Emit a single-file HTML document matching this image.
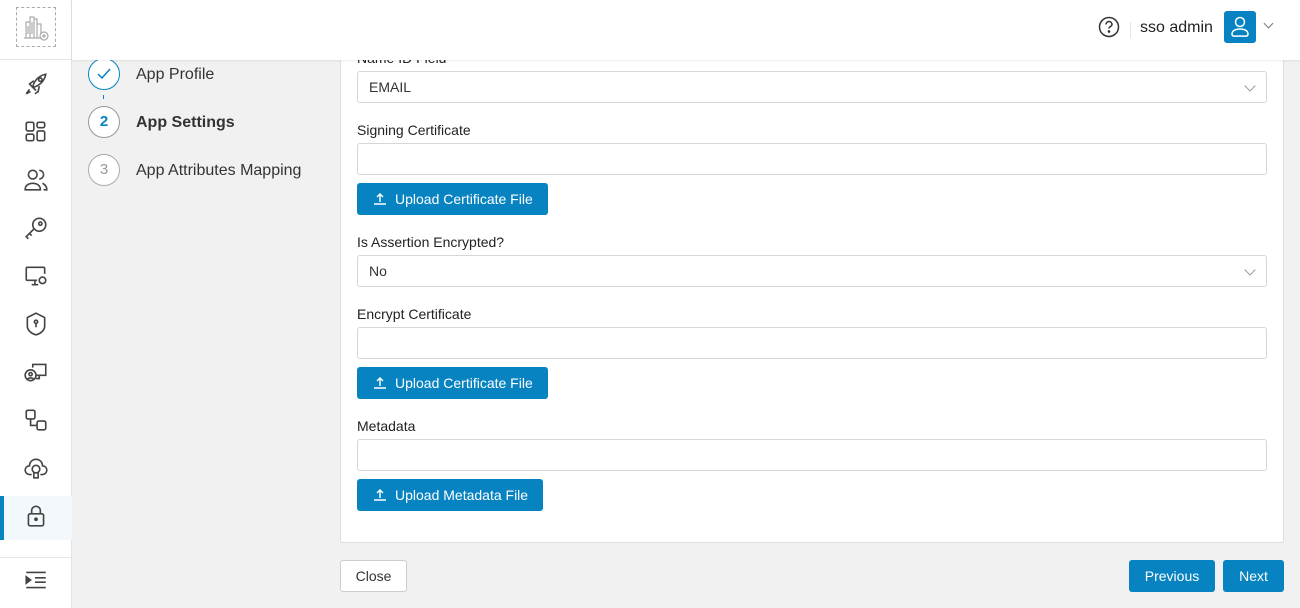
<!DOCTYPE html>
<html><head><meta charset="utf-8"><style>
*{box-sizing:border-box;margin:0;padding:0}
body{width:1300px;height:608px;overflow:hidden;background:#f1f1f1;font-family:"Liberation Sans",Arial,sans-serif;font-size:14px;color:#222;position:relative}
.side{position:absolute;left:0;top:0;width:72px;height:608px;background:#fff;border-right:1px solid #e4e4e4}
.logo{position:absolute;left:16px;top:7px;width:40px;height:40px;border:1px dashed #aaa}
.hdr{position:absolute;left:72px;top:0;right:0;height:60px;background:#fff;box-shadow:0 1px 2px rgba(0,0,0,.08);z-index:5}
.sidehr{position:absolute;left:0;top:59px;width:72px;border-top:1px solid #e6e6e6}
.ic{position:absolute;left:23px;width:26px;height:26px}
.active{position:absolute;left:0;top:496px;width:72px;height:44px;background:#f3f8fc}
.active:before{content:"";position:absolute;left:0;top:0;width:4px;height:44px;background:#0a84c1}
.card{position:absolute;left:340px;top:40px;width:944px;height:503px;background:#fff;border:1px solid #ddd;border-radius:3px}
.lbl{position:absolute;left:357px;font-size:14px;color:#222}
.inp{position:absolute;left:357px;width:910px;height:32px;border:1px solid #d6d6d6;border-radius:3px;background:#fff;padding:0 11px;line-height:30px;font-size:14px;color:#333}
.chev{position:absolute;right:12px;top:10px;width:8px;height:8px;border-right:1px solid #999;border-bottom:1px solid #999;transform:rotate(45deg)}
.btn{position:absolute;left:357px;height:32px;background:#0683c0;color:#fff;border-radius:3px;font-size:14px;line-height:32px;padding-left:38px}
.btn svg{position:absolute;left:16px;top:9px}
.step{position:absolute;left:88px;width:32px;height:32px;border-radius:50%;border:1px solid #999;text-align:center;line-height:30px;font-size:15px;background:#fff}
.st{position:absolute;left:136px;font-size:16px;color:#333}
.pb{position:absolute;top:560px;height:32px;border-radius:3px;line-height:32px;text-align:center;font-size:14px}
</style></head><body>
<div class="side">
<div class="logo"><svg width="38" height="38" viewBox="0 0 38 38" fill="none" stroke="#aaa" stroke-width="1.2"><path d="M9 30V14h4v16M13 30V9h4v21M17 30V11h3v19M20 30V16h4v10M7 30h18M11 18v8M15 14v12"/><circle cx="27" cy="28" r="4"/><path d="M27 26v4M25 28h4"/></svg></div>
<div class="sidehr"></div>
<div class="active"></div>
<svg class="ic" style="top:71px" viewBox="0 0 24 24" fill="none" stroke="#444" stroke-width="1.5"><path d="M9 15c1-6 6-11 12-12-1 6-6 11-12 12zM9 15l-3-3 4-3M12 18l-3-3M15 14l-1 5-3 2M6 17l-3 4 4-2"/><circle cx="16" cy="8" r="1.6"/></svg>
<svg class="ic" style="top:119px" viewBox="0 0 24 24" fill="none" stroke="#444" stroke-width="1.5"><rect x="3" y="3" width="7" height="8" rx="1.5"/><rect x="13" y="3" width="7" height="5" rx="1.5"/><rect x="3" y="14" width="7" height="6" rx="1.5"/><rect x="13" y="11" width="7" height="9" rx="1.5"/></svg>
<svg class="ic" style="top:167px" viewBox="0 0 24 24" fill="none" stroke="#444" stroke-width="1.5"><circle cx="9" cy="7" r="4"/><path d="M2 21c0-4 3-6 7-6s7 2 7 6zM15 3a4 4 0 010 8M18 15c2 1 4 3 4 6h-3"/></svg>
<svg class="ic" style="top:215px" viewBox="0 0 24 24" fill="none" stroke="#444" stroke-width="1.5"><circle cx="15" cy="9" r="6"/><circle cx="16" cy="8" r="1.5"/><path d="M10 13l-7 7 2 2M6 17l2 2"/></svg>
<svg class="ic" style="top:263px" viewBox="0 0 24 24" fill="none" stroke="#444" stroke-width="1.5"><path d="M13 16H4a1 1 0 01-1-1V5a1 1 0 011-1h15a1 1 0 011 1v5M8 20h6M11 16v4"/><circle cx="18" cy="16" r="3"/></svg>
<svg class="ic" style="top:311px" viewBox="0 0 24 24" fill="none" stroke="#444" stroke-width="1.5"><path d="M12 2l8 4v8c0 4-4 7-8 8-4-1-8-4-8-8V6z"/><circle cx="12" cy="10" r="1.5"/><path d="M12 12v3"/></svg>
<svg class="ic" style="top:359px" viewBox="0 0 24 24" fill="none" stroke="#444" stroke-width="1.5"><circle cx="7" cy="15" r="5"/><circle cx="7" cy="14" r="1.5"/><path d="M4 19c1-2 5-2 6 0M9 8V5h12v10h-9M15 15v3h-3"/></svg>
<svg class="ic" style="top:407px" viewBox="0 0 24 24" fill="none" stroke="#444" stroke-width="1.5"><rect x="3" y="3" width="8" height="8" rx="1.5"/><rect x="13" y="13" width="8" height="8" rx="1.5"/><path d="M7 11v6h6"/></svg>
<svg class="ic" style="top:455px" viewBox="0 0 24 24" fill="none" stroke="#444" stroke-width="1.5"><path d="M8 18H6a4 4 0 010-8 6 6 0 0112 0 4 4 0 010 8h-2"/><circle cx="12" cy="13" r="3.5"/><path d="M10 16v5h4v-5"/></svg>
<svg class="ic" style="top:503px" viewBox="0 0 24 24" fill="none" stroke="#444" stroke-width="1.5"><rect x="5" y="10" width="14" height="11" rx="1.5"/><path d="M8 10V7a4 4 0 018 0v3"/><circle cx="12" cy="15" r="1" fill="#444"/></svg>
<div style="position:absolute;left:0;top:557px;width:72px;border-top:1px solid #e6e6e6"></div>
<svg class="ic" style="top:567px" viewBox="0 0 24 24" fill="none" stroke="#444" stroke-width="1.5"><path d="M3 5h18M11 10h10M11 14h10M3 19h18"/><path d="M3 9l4 3-4 3z" fill="#444"/></svg>
</div>
<div class="hdr">
<svg style="position:absolute;left:1026px;top:16px" width="22" height="22" viewBox="0 0 22 22" fill="none" stroke="#333" stroke-width="1.5"><circle cx="11" cy="11" r="9.5"/><path d="M8 8.5a3 3 0 116 0c0 2-3 2-3 4"/><circle cx="11" cy="15.5" r=".6" fill="#333"/></svg>
<div style="position:absolute;left:1058px;top:22px;height:16px;border-left:1px solid #e6e6e6"></div>
<div style="position:absolute;left:1068px;top:19px;font-size:16px;color:#222">sso admin</div>
<div style="position:absolute;left:1152px;top:11px;width:32px;height:32px;background:#0683c0;border-radius:3px"><svg width="32" height="32" viewBox="0 0 32 32" fill="none" stroke="#fff" stroke-width="1.5"><circle cx="16" cy="11" r="4.5"/><path d="M8 23c0-3 3-5 8-5s8 2 8 5-3 2-8 2-8 1-8-2z"/></svg></div>
<div style="position:absolute;left:1193px;top:20px;width:7px;height:7px;border-right:1.3px solid #777;border-bottom:1.3px solid #777;transform:rotate(45deg)"></div>
</div>
<div class="step" style="top:58px;border-color:#0683c0"><svg width="30" height="30" viewBox="0 0 30 30" fill="none" stroke="#0683c0" stroke-width="1.5"><path d="M9 15l4 4 8-9"/></svg></div>
<div style="position:absolute;left:103px;top:95px;height:4px;border-left:1px solid #0683c0"></div>
<div class="st" style="top:66px">App Profile</div>
<div class="step" style="top:106px;color:#0683c0;font-weight:bold">2</div>
<div class="st" style="top:114px;font-weight:bold">App Settings</div>
<div class="step" style="top:154px;color:#999;border-color:#aaa">3</div>
<div class="st" style="top:162px">App Attributes Mapping</div>
<div class="card"></div>
<div class="lbl" style="top:50px;z-index:1">Name ID Field <span style="color:#e44">*</span></div>
<div class="inp" style="top:71px">EMAIL<span class="chev"></span></div>
<div class="lbl" style="top:122px">Signing Certificate</div>
<div class="inp" style="top:143px"></div>
<div class="btn" style="top:183px;width:191px"><svg width="14" height="14" viewBox="0 0 14 14" fill="none" stroke="#fff" stroke-width="1.4"><path d="M7 10V2M4 5l3-3 3 3M1 12h12"/></svg>Upload Certificate File</div>
<div class="lbl" style="top:234px">Is Assertion Encrypted?</div>
<div class="inp" style="top:255px">No<span class="chev"></span></div>
<div class="lbl" style="top:306px">Encrypt Certificate</div>
<div class="inp" style="top:327px"></div>
<div class="btn" style="top:367px;width:191px"><svg width="14" height="14" viewBox="0 0 14 14" fill="none" stroke="#fff" stroke-width="1.4"><path d="M7 10V2M4 5l3-3 3 3M1 12h12"/></svg>Upload Certificate File</div>
<div class="lbl" style="top:418px">Metadata</div>
<div class="inp" style="top:439px"></div>
<div class="btn" style="top:479px;width:186px"><svg width="14" height="14" viewBox="0 0 14 14" fill="none" stroke="#fff" stroke-width="1.4"><path d="M7 10V2M4 5l3-3 3 3M1 12h12"/></svg>Upload Metadata File</div>
<div class="pb" style="left:340px;width:67px;background:#fff;border:1px solid #ccc;color:#333;line-height:30px">Close</div>
<div class="pb" style="left:1129px;width:86px;background:#0683c0;color:#fff">Previous</div>
<div class="pb" style="left:1223px;width:61px;background:#0683c0;color:#fff">Next</div>
</body></html>
